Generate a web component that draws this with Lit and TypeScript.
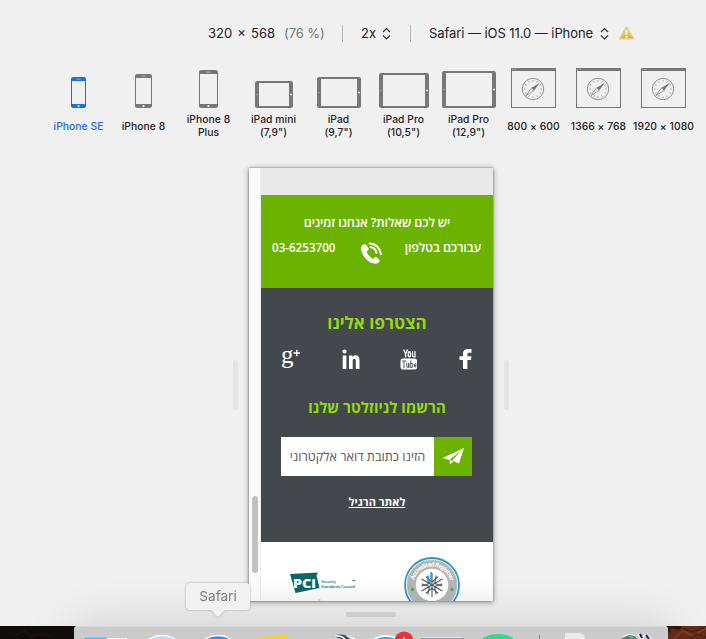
import { LitElement, html, svg, css } from "lit";
import { customElement, property } from "lit/decorators.js";

type Kind = "phone" | "tablet" | "desktop";
interface Device { kind: Kind; w: number; h: number; lines: string[]; active?: boolean; }

const DEVICES: Device[] = [
  { kind: "phone", w: 15, h: 31, lines: ["iPhone SE"], active: true },
  { kind: "phone", w: 17, h: 34, lines: ["iPhone 8"] },
  { kind: "phone", w: 19, h: 38, lines: ["iPhone 8", "Plus"] },
  { kind: "tablet", w: 38, h: 27, lines: ["iPad mini", "(7,9\")"] },
  { kind: "tablet", w: 44, h: 31, lines: ["iPad", "(9,7\")"] },
  { kind: "tablet", w: 50, h: 35, lines: ["iPad Pro", "(10,5\")"] },
  { kind: "tablet", w: 54, h: 37, lines: ["iPad Pro", "(12,9\")"] },
  { kind: "desktop", w: 45, h: 40, lines: ["800 × 600"] },
  { kind: "desktop", w: 45, h: 40, lines: ["1366 × 768"] },
  { kind: "desktop", w: 45, h: 40, lines: ["1920 × 1080"] },
];

@customElement("device-option")
export class DeviceOption extends LitElement {
  @property({ attribute: false }) device!: Device;

  static styles = css`
    :host { display: flex; flex-direction: column; align-items: center; width: 65px; color: #222; }
    .icon { height: 41px; display: flex; align-items: flex-end; justify-content: center; color: #777; }
    .label { height: 26px; margin-top: 5px; display: flex; flex-direction: column; justify-content: center;
      align-items: center; font-size: 10.3px; line-height: 13px; white-space: nowrap; letter-spacing: 0.06px; font-weight: 450; }
    .active .icon { color: #1270f0; }
    .active .label { color: #2468e8; }
    svg { display: block; }
  `;

  private shape({ kind, w, h }: Device) {
    if (kind === "phone") {
      return svg`<rect width=${w} height=${h} rx="2.2" fill="currentColor"/>
        <rect x="1" y="4" width=${w - 2} height=${h - 8} fill="#f0f0f0"/>
        <rect x=${w / 2 - 2} y="1.7" width="4" height="0.8" fill="#bbb"/>
        <circle cx=${w / 2} cy=${h - 2} r="1.1" fill="#f0f0f0"/>`;
    }
    if (kind === "tablet") {
      return svg`<rect width=${w} height=${h} rx="2.2" fill="currentColor"/>
        <rect x="4" y="2" width=${w - 8} height=${h - 4} fill="#f0f0f0"/>
        <circle cx="2" cy=${h / 2} r="0.5" fill="#ccc"/>
        <circle cx=${w - 2} cy=${h / 2} r="1.1" fill="#f0f0f0"/>`;
    }
    const ticks = Array.from({ length: 12 }, (_, i) => i * 30);
    return svg`<rect x="0.5" y="0.5" width=${w - 1} height=${h - 1} fill="none" stroke="currentColor"/>
      <rect width=${w} height="3" fill="currentColor"/>
      <path d="M1 1.4h4" stroke="#bbb" stroke-width="0.8" stroke-dasharray="1 0.5"/>
      <circle cx="22" cy="21" r="10.7" fill="none" stroke="currentColor" stroke-width="0.8"/>
      ${ticks.map(a => svg`<path d="M22 12v1.6" stroke="currentColor" stroke-width="0.6" transform="rotate(${a} 22 21)"/>`)}
      <path d="M29 14.5L23.3 22.300L20.700 19.700Z" fill="currentColor"/>
      <path d="M15 27.500L20.700 19.700L23.300 22.300Z" fill="#f0f0f0" stroke="currentColor" stroke-width="0.7"/>`;
  }

  render() {
    const d = this.device;
    return html`<div class=${d.active ? "active" : ""}>
      <div class="icon"><svg width=${d.w} height=${d.h}>${this.shape(d)}</svg></div>
      <div class="label">${d.lines.map(l => html`<span>${l}</span>`)}</div>
    </div>`;
  }
}

@customElement("site-preview")
export class SitePreview extends LitElement {
  static styles = css`
    :host { display: flex; width: 244px; height: 433px; background: #fff; overflow: hidden;
      box-shadow: 0 0 2px rgba(0,0,0,.4), 0 1px 6px rgba(0,0,0,.4);
      font-family: "Open Sans", "Noto Sans", "DejaVu Sans", sans-serif; }
    svg { display: block; flex: none; }
    .gutter { width: 12px; box-sizing: border-box; background: #fafafa; border-right: 1px solid #ececec;
      padding: 328px 0 0 3px; }
    .thumb { width: 6px; height: 77px; border-radius: 3px; background: #c1c1c1; }
    .page { width: 232px; }
    .blank { height: 27px; background: #e9e9e9; }
    .contact { height: 93px; background: #6bb300; color: #fff; font-size: 12.6px; line-height: 18px;
      box-sizing: border-box; padding-top: 19px; font-weight: 600; white-space: nowrap; }
    .ask { text-align: center; letter-spacing: -0.15px; }
    .phone-row { display: flex; padding: 6px 12px 0 11px; }
    .phone-row svg { margin: 4px 0 0 0; }
    .phone { width: 88px; font-size: 11.600px; line-height: 20px; }
    .words { flex: 1; letter-spacing: -0.15px; line-height: 19px; }
    .join { height: 254px; background: #44474b; color: #fff; box-sizing: border-box; padding-top: 23px; text-align: center; }
    .title { color: #8fdc12; font-weight: 700; font-size: 17px; line-height: 24px; white-space: nowrap; }
    .small { font-size: 15px; }
    .social { display: flex; justify-content: space-between; height: 60px; box-sizing: border-box; padding: 14px 21px 0 20px; }
    .news { display: flex; margin: 18px 21px 0 20px; height: 39px; }
    .field { width: 153px; background: #fff; color: #55585b; font-size: 12.7px; line-height: 39px; white-space: nowrap; text-align: center; }
    .send { width: 38px; background: #6bb300; }
    .regular { font-size: 11px; line-height: 16px; font-weight: 700; text-decoration: underline; margin-top: 18px; }
    .badges { height: 59px; background: linear-gradient(#fff 60%, #f7f7f7); }
  `;
  render() {
    return html`
      <div class="gutter"><div class="thumb"></div></div>
      <div class="page">
        <div class="blank"></div>
        <div class="contact">
          <div class="ask" dir="rtl">יש לכם שאלות? אנחנו זמינים</div>
          <div class="phone-row">
            <span class="phone">03-6253700</span>
            <svg width="22" height="22" viewBox="0 0 22 22" fill="none" stroke="#fff">
              <path d="M3 2.8C1.2 4 .5 6 1 8c1.4 6 6 11.6 12 13.300c2 .7 4.300.5 5.600-.8c1.200-1 1.500-2 .7-2.800l-2.300-2.100c-1-.8-2.100-.6-3 .4l-1 1C10 15.400 7.700 12.400 6.600 9.700l1-.9c1-.9 1.300-1.800.7-2.900L6.600 3.300C5.800 2 4.300 1.900 3 2.800Z" fill="#fff" stroke="none"/>
              <path d="M10.500 5c3.200.4 5.400 2.600 6 6M9.600 1.500c6 .1 10.400 4.300 11.300 10.700" stroke-width="1.900" stroke-linecap="round"/>
            </svg>
            <span class="words" dir="rtl">עבורכם בטלפון</span>
          </div>
        </div>
        <div class="join">
          <div class="title" dir="rtl">הצטרפו אלינו</div>
          <div class="social">
            <svg width="20" height="20" overflow="visible">
              <text x="0" y="13.500" font-family="Liberation Serif" font-size="25" fill="#fff">g</text>
              <path d="M12.500 4h6.500M15.800 .800v6.500" stroke="#fff" stroke-width="1.400"/>
            </svg>
            <svg width="18" height="20" viewBox="0 0 18 20" fill="#fff">
              <circle cx="2.500" cy="2.500" r="2.100"/><path d="M.7 6.500h3.700V20H.7zM7 6.500h3.500v1.700c2-3 7-2.500 7 2.800v9h-3.700v-8c0-3.200-3.100-3-3.100 0v8H7z"/>
            </svg>
            <svg width="18" height="21" viewBox="0 0 18 21" fill="none" stroke="#fff" stroke-width="1.400">
              <path d="M3.600.5l2 4.200l2-4.200M5.600 4v4.500"/><rect x="8.300" y="2.700" width="2.200" height="5" rx="1"/><path d="M12.600 2v5q.6 1.500 2.400 0V2M15 2v6.500" stroke-width="1.200"/>
              <rect x=".5" y="9.500" width="16.500" height="11" rx="2.500" fill="#fff" stroke="none"/>
              <path d="M2 12h4M4 12v7M6.800 14v4q1 1 2 0v-4M8.800 14v5M10.800 11.500V19M10.800 14.600q2-1 2 1v2q0 1.400-2 .5M16 17v.7q-1 1-1.400 0v-2.500q.8-1 1.400 0v1.200h-1.200" stroke="#44474b" stroke-width=".9"/>
            </svg>
            <svg width="13" height="20" viewBox="0 0 13 20"><path d="M4 20v-9H.5V7.300H4V5C4 1.500 6 0 9 0h3.500v3.700h-2C9 3.700 8.400 4.200 8.400 5.500v1.800h4l-.4 3.700H8.400v9z" fill="#fff"/></svg>
          </div>
          <div class="title small" dir="rtl">הרשמו לניוזלטר שלנו</div>
          <div class="news">
            <div class="field" dir="rtl">הזינו כתובת דואר אלקטרוני</div>
            <div class="send"><svg width="38" height="39"><path d="M8.500 21L30 11L25 26.500L19.500 24L16 27.500L15.500 23ZM15.500 23L27 13.500L18 24Z" fill="#fff" fill-rule="evenodd"/></svg></div>
          </div>
          <div class="regular" dir="rtl">לאתר הרגיל</div>
        </div>
        <div class="badges">
          <svg width="232" height="59" font-family="Open Sans" font-weight="700">
            <path d="M29 32l28-1.500l-1.500 3l3 12.500l-24 5z" fill="#0b666a"/>
            <text x="32" y="46" font-size="12.500" font-weight="800" fill="#fff" textLength="23" lengthAdjust="spacingAndGlyphs">PCi</text>
            <text x="60" y="40.500" font-size="4.200" font-weight="600" fill="#287f83" textLength="15">Security</text>
            <text x="60" y="45.500" font-size="4.200" font-weight="600" fill="#176f73" textLength="34">Standards Council</text>
            <path d="M91.500 38.500h2.500" stroke="#287f83"/><path d="M57.500 58h2" stroke="#bbb"/>
            <circle cx="171" cy="43" r="27" fill="#fff" stroke="#2b9aca" stroke-width="1.800"/>
            <circle cx="171" cy="43" r="20.500" fill="none" stroke="#b2b5b5" stroke-width="8.500"/>
            <circle cx="171" cy="43" r="25" fill="none" stroke="#a5a5a5" stroke-width=".6"/>
            <path id="ring" d="M152.500 43a18.500 18.500 0 0 1 37 0" fill="none"/>
            <text font-size="6" fill="#fff"><textPath href="#ring" startOffset="5" textLength="49">Accredited Registrar</textPath></text>
            <circle cx="151.500" cy="47.500" r="1.700" fill="#55a950"/><circle cx="191" cy="47.500" r="1.700" fill="#55a950"/>
            ${[0, 60, 120, 180, 240, 300].map(a => svg`<path d="M171 43V31M171 40l-4-3.500v-3M171 40l4-3.500v-3" transform="rotate(${a} 171 43)" fill="none" stroke="#56595c" stroke-width="1.100"/>`)}
            <path d="M170 42V30M167 40v-6" stroke="#2c9ed8" stroke-width="1.500"/>
          </svg>
        </div>
      </div>`;
  }
}

@customElement("app-root")
export class AppRoot extends LitElement {
  static styles = css`
    :host { display: block; position: relative; width: 706px; height: 639px; overflow: hidden; background: #f0f0f0;
      font-family: Inter, "Liberation Sans", sans-serif; color: #222; }
    svg { display: block; flex: none; }
    .toolbar { display: flex; align-items: center; height: 66px; padding: 0 0 1px 208px; font-size: 13px; white-space: nowrap; }
    .size { width: 76px; word-spacing: 1.5px; }
    .scale { width: 58px; color: #777; letter-spacing: -0.1px; }
    .sep { width: 1px; height: 17px; background: #b5b5b5; }
    .ratio { width: 21px; margin-left: 18px; }
    .ratio + svg { margin-right: 19px; }
    .agent { width: 171px; margin-left: 18px; letter-spacing: -0.07px; }
    .warn { margin-left: 9px; }
    .devices { display: flex; padding-left: 46px; height: 72px; }
    .stage { display: flex; align-items: flex-start; padding: 29px 0 0 233px; }
    .handle { width: 5px; height: 50px; margin-top: 192px; border-radius: 2px; background: #e4e4e4; }
    .left { margin-right: 11px; }
    .right { margin-left: 11px; }
    .bottom { width: 50px; height: 5px; margin: 11px 0 0 346px; border-radius: 2px; background: #d8d8d8; }
    .shade { position: absolute; left: 74px; top: 626px; width: 594px; height: 60px; box-shadow: 0 0 48px rgba(0,0,0,.16); }
    .tip { position: absolute; left: 186px; top: 583px; width: 64px; height: 35px; filter: drop-shadow(0 0 1px rgba(0,0,0,.3)); }
    .bubble { height: 27px; border-radius: 4px; background: #f1f1f1; color: #7b7b7b; font-size: 13.600px; line-height: 27px; text-align: center; }
    .tail { margin-left: 24px; }
    .dock { position: absolute; left: 0; bottom: 0; }
  `;

  private chevrons() {
    return html`<svg width="9" height="13" fill="none" stroke="#333" stroke-width="1.200"><path d="M1 5L4.500 1.500L8 5M1 8.500L4.500 12L8 8.500"/></svg>`;
  }

  render() {
    return html`
      <div class="toolbar">
        <span class="size">320 × 568</span><span class="scale">(76 %)</span><span class="sep"></span>
        <span class="ratio">2x</span>${this.chevrons()}<span class="sep"></span>
        <span class="agent">Safari — iOS 11.0 — iPhone</span>${this.chevrons()}
        <svg class="warn" width="17" height="16"><defs><linearGradient id="amber" x2="0" y2="1"><stop stop-color="#f8e17a"/><stop offset="1" stop-color="#e4a81a"/></linearGradient></defs>
          <path d="M8.500 2L15.300 13.700H1.700Z" fill="url(#amber)" stroke="#e3cd86" stroke-width="1.600" stroke-linejoin="round"/>
          <path d="M8.500 5v5M8.500 11v1.800" stroke="#fff" stroke-width="1.800"/></svg>
      </div>
      <div class="devices">${DEVICES.map(d => html`<device-option .device=${d}></device-option>`)}</div>
      <div class="stage"><div class="handle left"></div><site-preview></site-preview><div class="handle right"></div></div>
      <div class="bottom"></div>
      <div class="shade"></div>
      <div class="tip"><div class="bubble">Safari</div><svg class="tail" width="16" height="8"><path d="M0 0h16q-2 0-4 3L9.500 6q-1.500 1.500-3 0L4 3Q2 0 0 0Z" fill="#f1f1f1"/></svg></div>
      <svg class="dock" width="706" height="13">
        <rect width="90" height="13" fill="#100c0b"/><path d="M8 6l7 3l9-4l8 6l11-4l9 3" stroke="#1a1210" stroke-width="2" fill="none"/>
        <rect x="650" width="56" height="13" fill="#652a17"/>
        <path d="M664 0h19l-4 4l-8-2v5l-7-3z" fill="#32170f"/><path d="M674 12l9-7l10 5l13-8" stroke="#7a3a24" stroke-width="2" fill="none"/><path d="M683 3l10 3l12-5M690 13l7-5l9 3" stroke="#3c1b13" fill="none"/>
        <path d="M74 13V3q0-3 3-3h588q3 0 3 3v10z" fill="#cbcbcb"/><path d="M76 .5h590" stroke="#d8d8d8"/>
        <path d="M85 11.500h21.500V13H84z" fill="#45c1e9"/><path d="M107 12h20v1h-20z" fill="#eef1f3"/>
        <ellipse cx="162" cy="20.500" rx="17" ry="11" fill="#b9dcea" stroke="#f5f7f8" stroke-width="1.500"/>
        <ellipse cx="218" cy="20.500" rx="17" ry="11" fill="#4287e8" stroke="#f5f7f8" stroke-width="1.500"/>
        <path d="M257 12l31-4v5h-31z" fill="#f5d22d"/>
        <path d="M333 10q11-4 17 3h-9z" fill="#3d4852"/><path d="M334 10q7-1 11 3M347 10l8 3" stroke="#f1f3f4" stroke-width="1.700" fill="none"/>
        <ellipse cx="386" cy="22" rx="17" ry="12" fill="#28a9e0" stroke="#f5f7f8" stroke-width="2"/>
        <circle cx="404" cy="15" r="9.500" fill="#ed3237"/><path d="M404 11v2" stroke="#fff" stroke-width="1.500"/>
        <path d="M421 12.500h43" stroke="#8b9aa8"/><path d="M423 11.500h39" stroke="#e3e7eb"/>
        <ellipse cx="498" cy="22" rx="21" ry="14" fill="#2edb8d"/><path d="M539.500 9v4" stroke="#888"/>
        <path d="M565 13V9q0-2 3-2h11q6 1 6 6z" fill="#ebebeb"/>
        <path d="M622 13q3-6 11-5l4 5z" fill="#567a79"/><path d="M623 11q7-5 12-1M638 8l3 5l4-4l7 4" fill="none" stroke="#f4f4f4" stroke-width="1.500"/><path d="M640 8l2 4M646 9l3 4" stroke="#25223e" stroke-width="2"/><path d="M629 10l4 2" stroke="#4ac07e" stroke-width="2"/>
      </svg>`;
  }
}
